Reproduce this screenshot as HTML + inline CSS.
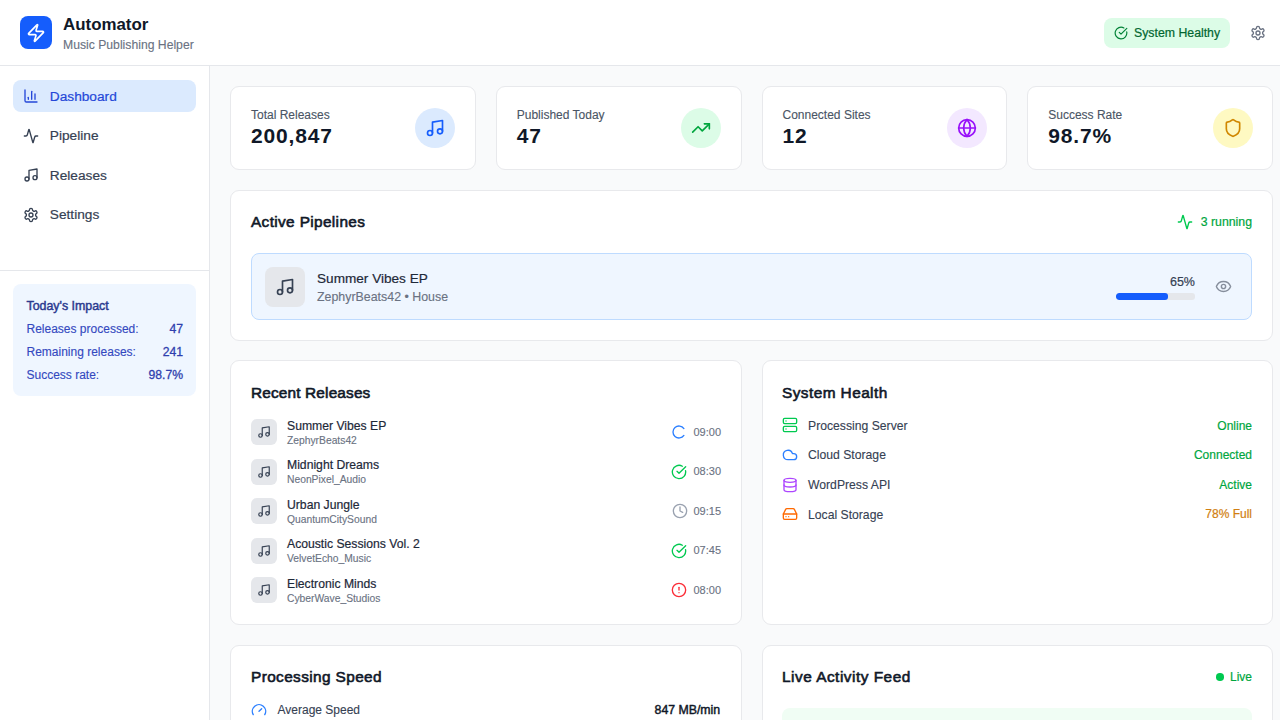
<!DOCTYPE html>
<html><head><meta charset="utf-8">
<style>
*{box-sizing:border-box;margin:0;padding:0}
html,body{width:1280px;height:720px;overflow:hidden;background:#f9fafb;font-family:"Liberation Sans",sans-serif;color:#101828}
.a{position:absolute}
.t{position:absolute;line-height:1;white-space:nowrap;-webkit-text-stroke:0.12px currentColor}
.r{text-align:right}
.m{-webkit-text-stroke:0.2px currentColor}
.t[style*="font-weight:700"]{-webkit-text-stroke:0}
svg.i{position:absolute;fill:none;stroke:currentColor;stroke-width:2;stroke-linecap:round;stroke-linejoin:round}
.card{position:absolute;background:#fff;border:1px solid #e8e9ec;border-radius:9px}
</style></head><body>
<!-- header -->
<div class="a" style="left:0;top:0;width:1280px;height:66px;background:#fff;border-bottom:1px solid #e5e7eb"></div>
<div class="a" style="left:20px;top:16.3px;width:32px;height:32.6px;background:#155dfc;border-radius:8px"></div>
<svg class="i" style="left:26px;top:22.5px;color:#fff" width="20" height="20" viewBox="0 0 24 24"><path d="M4 14a1 1 0 0 1-.78-1.63l9.9-10.2a.5.5 0 0 1 .86.46l-1.92 6.02A1 1 0 0 0 13 10h7a1 1 0 0 1 .78 1.63l-9.9 10.2a.5.5 0 0 1-.86-.46l1.92-6.02A1 1 0 0 0 11 14z"/></svg>
<div class="t" style="left:63px;top:16.7px;font-size:16.9px;font-weight:700;color:#101828">Automator</div>
<div class="t" style="left:63px;top:38.8px;font-size:12.2px;color:#6a7282">Music Publishing Helper</div>
<div class="a" style="left:1104px;top:18px;width:126px;height:30px;background:#dcfce7;border-radius:8px"></div>
<svg class="i" style="left:1113.7px;top:25.7px;color:#008236" width="14" height="14" viewBox="0 0 24 24"><path d="M21.801 10A10 10 0 1 1 17 3.335"/><path d="m9 11 3 3L22 4"/></svg>
<div class="t m" style="left:1134px;top:26.6px;font-size:12.3px;color:#016630">System Healthy</div>
<svg class="i" style="left:1250px;top:24.5px;color:#6a7282" width="16" height="16" viewBox="0 0 24 24"><path d="M12.22 2h-.44a2 2 0 0 0-2 2v.18a2 2 0 0 1-1 1.73l-.43.25a2 2 0 0 1-2 0l-.15-.08a2 2 0 0 0-2.73.73l-.22.38a2 2 0 0 0 .73 2.73l.15.1a2 2 0 0 1 1 1.72v.51a2 2 0 0 1-1 1.74l-.15.09a2 2 0 0 0-.73 2.73l.22.38a2 2 0 0 0 2.73.73l.15-.08a2 2 0 0 1 2 0l.43.25a2 2 0 0 1 1 1.73V20a2 2 0 0 0 2 2h.44a2 2 0 0 0 2-2v-.18a2 2 0 0 1 1-1.73l.43-.25a2 2 0 0 1 2 0l.15.08a2 2 0 0 0 2.73-.73l.22-.39a2 2 0 0 0-.73-2.73l-.15-.08a2 2 0 0 1-1-1.74v-.5a2 2 0 0 1 1-1.74l.15-.09a2 2 0 0 0 .73-2.73l-.22-.38a2 2 0 0 0-2.73-.73l-.15.08a2 2 0 0 1-2 0l-.43-.25a2 2 0 0 1-1-1.73V4a2 2 0 0 0-2-2z"/><circle cx="12" cy="12" r="3"/></svg>

<!-- sidebar -->
<div class="a" style="left:0;top:66px;width:210px;height:654px;background:#fff;border-right:1px solid #e5e7eb"></div>
<div class="a" style="left:13px;top:80px;width:183px;height:32px;background:#dbeafe;border-radius:8px"></div>
<svg class="i" style="left:23.3px;top:88px;color:#2447d8" width="16" height="16" viewBox="0 0 24 24"><path d="M3 3v16a2 2 0 0 0 2 2h16"/><path d="M18 17V9"/><path d="M13 17V5"/><path d="M8 17v-3"/></svg>
<div class="t m" style="left:49.8px;top:90px;font-size:13.7px;color:#2447d8">Dashboard</div>
<svg class="i" style="left:23px;top:127.5px;color:#364153" width="16" height="16" viewBox="0 0 24 24"><path d="M22 12h-2.48a2 2 0 0 0-1.93 1.46l-2.35 8.36a.25.25 0 0 1-.48 0L9.24 2.18a.25.25 0 0 0-.48 0l-2.35 8.36A2 2 0 0 1 4.49 12H2"/></svg>
<div class="t m" style="left:49.8px;top:129.3px;font-size:13.7px;color:#364153">Pipeline</div>
<svg class="i" style="left:23px;top:167px;color:#364153" width="16" height="16" viewBox="0 0 24 24"><path d="M9 18V5l12-2v13"/><circle cx="6" cy="18" r="3"/><circle cx="18" cy="16" r="3"/></svg>
<div class="t m" style="left:49.8px;top:168.5px;font-size:13.7px;color:#364153">Releases</div>
<svg class="i" style="left:23px;top:206.5px;color:#364153" width="16" height="16" viewBox="0 0 24 24"><path d="M12.22 2h-.44a2 2 0 0 0-2 2v.18a2 2 0 0 1-1 1.730l-.43.25a2 2 0 0 1-2 0l-.15-.08a2 2 0 0 0-2.73.73l-.22.38a2 2 0 0 0 .73 2.73l.15.1a2 2 0 0 1 1 1.72v.51a2 2 0 0 1-1 1.74l-.15.09a2 2 0 0 0-.73 2.73l.22.38a2 2 0 0 0 2.73.73l.15-.08a2 2 0 0 1 2 0l.43.25a2 2 0 0 1 1 1.73V20a2 2 0 0 0 2 2h.44a2 2 0 0 0 2-2v-.18a2 2 0 0 1 1-1.73l.43-.25a2 2 0 0 1 2 0l.15.08a2 2 0 0 0 2.73-.73l.22-.39a2 2 0 0 0-.73-2.73l-.15-.08a2 2 0 0 1-1-1.740v-.5a2 2 0 0 1 1-1.74l.15-.09a2 2 0 0 0 .73-2.73l-.22-.38a2 2 0 0 0-2.73-.73l-.15.08a2 2 0 0 1-2 0l-.43-.25a2 2 0 0 1-1-1.73V4a2 2 0 0 0-2-2z"/><circle cx="12" cy="12" r="3"/></svg>
<div class="t m" style="left:49.8px;top:207.5px;font-size:13.7px;color:#364153">Settings</div>
<div class="a" style="left:0;top:270px;width:209px;height:1px;background:#e5e7eb"></div>
<div class="a" style="left:13px;top:284px;width:183px;height:112px;background:#eff6ff;border-radius:8px"></div>
<div class="t" style="left:26.5px;top:299.9px;font-size:12.4px;-webkit-text-stroke:0.45px #2b3a8f;color:#2b3a8f">Today's Impact</div>
<div class="t" style="left:26.5px;top:323.3px;font-size:12px;color:#3348c0">Releases processed:</div>
<div class="t r" style="right:1097px;top:323.3px;font-size:12.2px;-webkit-text-stroke:0.3px #2f3fae;color:#2f3fae">47</div>
<div class="t" style="left:26.5px;top:346.3px;font-size:12px;color:#3348c0">Remaining releases:</div>
<div class="t r" style="right:1097px;top:346.3px;font-size:12.2px;-webkit-text-stroke:0.3px #2f3fae;color:#2f3fae">241</div>
<div class="t" style="left:26.5px;top:369px;font-size:12px;color:#3348c0">Success rate:</div>
<div class="t r" style="right:1097px;top:369px;font-size:12.2px;-webkit-text-stroke:0.3px #2f3fae;color:#2f3fae">98.7%</div>

<!-- stats -->
<div class="card" style="left:230.0px;top:86px;width:245.75px;height:84px"></div>
<div class="t" style="left:251.0px;top:109.4px;font-size:12px;color:#4a5565">Total Releases</div>
<div class="t" style="left:251.0px;top:125px;font-size:21px;font-weight:700;letter-spacing:0.85px;color:#101828">200,847</div>
<div class="a" style="left:415.25px;top:107.5px;width:40px;height:40px;border-radius:50%;background:#dbeafe"></div>
<svg class="i" style="left:425.25px;top:117.5px;color:#155dfc" width="20" height="20" viewBox="0 0 24 24"><path d="M9 18V5l12-2v13"/><circle cx="6" cy="18" r="3"/><circle cx="18" cy="16" r="3"/></svg>
<div class="card" style="left:495.75px;top:86px;width:245.75px;height:84px"></div>
<div class="t" style="left:516.75px;top:109.4px;font-size:12px;color:#4a5565">Published Today</div>
<div class="t" style="left:516.75px;top:125px;font-size:21px;font-weight:700;letter-spacing:0.85px;color:#101828">47</div>
<div class="a" style="left:681.0px;top:107.5px;width:40px;height:40px;border-radius:50%;background:#dcfce7"></div>
<svg class="i" style="left:691.0px;top:117.5px;color:#00a63e" width="20" height="20" viewBox="0 0 24 24"><polyline points="22 7 13.5 15.5 8.5 10.5 2 17"/><polyline points="16 7 22 7 22 13"/></svg>
<div class="card" style="left:761.5px;top:86px;width:245.75px;height:84px"></div>
<div class="t" style="left:782.5px;top:109.4px;font-size:12px;color:#4a5565">Connected Sites</div>
<div class="t" style="left:782.5px;top:125px;font-size:21px;font-weight:700;letter-spacing:0.85px;color:#101828">12</div>
<div class="a" style="left:946.75px;top:107.5px;width:40px;height:40px;border-radius:50%;background:#f3e8ff"></div>
<svg class="i" style="left:956.75px;top:117.5px;color:#9810fa" width="20" height="20" viewBox="0 0 24 24"><circle cx="12" cy="12" r="10"/><path d="M12 2a14.5 14.5 0 0 0 0 20 14.5 14.5 0 0 0 0-20"/><path d="M2 12h20"/></svg>
<div class="card" style="left:1027.25px;top:86px;width:245.75px;height:84px"></div>
<div class="t" style="left:1048.25px;top:109.4px;font-size:12px;color:#4a5565">Success Rate</div>
<div class="t" style="left:1048.25px;top:125px;font-size:21px;font-weight:700;letter-spacing:0.85px;color:#101828">98.7%</div>
<div class="a" style="left:1212.5px;top:107.5px;width:40px;height:40px;border-radius:50%;background:#fef9c2"></div>
<svg class="i" style="left:1222.5px;top:117.5px;color:#d08700" width="20" height="20" viewBox="0 0 24 24"><path d="M20 13c0 5-3.5 7.5-7.66 8.95a1 1 0 0 1-.67-.01C7.5 20.5 4 18 4 13V6a1 1 0 0 1 1-1c2 0 4.5-1.2 6.24-2.72a1.17 1.17 0 0 1 1.52 0C14.51 3.81 17 5 19 5a1 1 0 0 1 1 1z"/></svg>
<!-- active pipelines -->
<div class="card" style="left:230px;top:190px;width:1043px;height:151px"></div>
<div class="t" style="left:251px;top:213.8px;font-size:15.4px;letter-spacing:0.35px;-webkit-text-stroke:0.6px #101828;color:#101828">Active Pipelines</div>
<svg class="i" style="left:1176.5px;top:213.6px;color:#00c950" width="16" height="16" viewBox="0 0 24 24"><path d="M22 12h-2.48a2 2 0 0 0-1.93 1.46l-2.35 8.36a.25.25 0 0 1-.48 0L9.24 2.18a.25.25 0 0 0-.48 0l-2.35 8.36A2 2 0 0 1 4.49 12H2"/></svg>
<div class="t r m" style="right:28px;top:216.2px;font-size:12.3px;color:#00a63e">3 running</div>
<div class="a" style="left:251px;top:253px;width:1001px;height:67px;background:#eff6ff;border:1px solid #bedbff;border-radius:8px"></div>
<div class="a" style="left:264.5px;top:266.5px;width:40px;height:40px;background:#e5e7eb;border-radius:8px"></div>
<svg class="i" style="left:274.5px;top:276.5px;color:#364153" width="20" height="20" viewBox="0 0 24 24"><path d="M9 18V5l12-2v13"/><circle cx="6" cy="18" r="3"/><circle cx="18" cy="16" r="3"/></svg>
<div class="t m" style="left:317px;top:272.4px;font-size:13.6px;color:#1e2939">Summer Vibes EP</div>
<div class="t" style="left:317px;top:290.6px;font-size:12.4px;color:#6a7282">ZephyrBeats42 &bull; House</div>
<div class="t r m" style="right:85px;top:275.6px;font-size:12.5px;color:#364153">65%</div>
<div class="a" style="left:1116.3px;top:293px;width:79px;height:6.5px;background:#e5e7eb;border-radius:3px;overflow:hidden"><div style="width:65%;height:100%;background:#155dfc;border-radius:3px"></div></div>
<svg class="i" style="left:1215px;top:278.1px;color:#868e9c" width="17" height="17" viewBox="0 0 24 24"><path d="M2.062 12.348a1 1 0 0 1 0-.696 10.75 10.75 0 0 1 19.876 0 1 1 0 0 1 0 .696 10.75 10.75 0 0 1-19.876 0"/><circle cx="12" cy="12" r="3"/></svg>
<!-- recent releases -->
<div class="card" style="left:230px;top:360px;width:511.75px;height:265px"></div>
<div class="t" style="left:251px;top:384.8px;font-size:15.4px;letter-spacing:0.15px;-webkit-text-stroke:0.6px #101828;color:#101828">Recent Releases</div>
<div class="a" style="left:251px;top:419.0px;width:26px;height:26px;background:#e5e7eb;border-radius:6px"></div>
<svg class="i" style="left:257px;top:425.0px;color:#364153" width="14" height="14" viewBox="0 0 24 24"><path d="M9 18V5l12-2v13"/><circle cx="6" cy="18" r="3"/><circle cx="18" cy="16" r="3"/></svg>
<div class="t m" style="left:287px;top:419.64px;font-size:12.2px;color:#1e2939">Summer Vibes EP</div>
<div class="t" style="left:287px;top:435.51px;font-size:10.3px;color:#6a7282">ZephyrBeats42</div>
<svg class="i" style="left:670.5px;top:424.0px;color:#2b7fff" width="16" height="16" viewBox="0 0 24 24"><path d="M19.37 17.16A9 9 0 1 1 19.37 6.84"/></svg>
<div class="t r" style="right:559px;top:426.69px;font-size:11px;color:#6a7282">09:00</div>
<div class="a" style="left:251px;top:458.5px;width:26px;height:26px;background:#e5e7eb;border-radius:6px"></div>
<svg class="i" style="left:257px;top:464.5px;color:#364153" width="14" height="14" viewBox="0 0 24 24"><path d="M9 18V5l12-2v13"/><circle cx="6" cy="18" r="3"/><circle cx="18" cy="16" r="3"/></svg>
<div class="t m" style="left:287px;top:459.14px;font-size:12.2px;color:#1e2939">Midnight Dreams</div>
<div class="t" style="left:287px;top:475.01px;font-size:10.3px;color:#6a7282">NeonPixel_Audio</div>
<svg class="i" style="left:670.5px;top:463.5px;color:#00c950" width="16" height="16" viewBox="0 0 24 24"><path d="M21.801 10A10 10 0 1 1 17 3.335"/><path d="m9 11 3 3L22 4"/></svg>
<div class="t r" style="right:559px;top:466.19px;font-size:11px;color:#6a7282">08:30</div>
<div class="a" style="left:251px;top:498.0px;width:26px;height:26px;background:#e5e7eb;border-radius:6px"></div>
<svg class="i" style="left:257px;top:504.0px;color:#364153" width="14" height="14" viewBox="0 0 24 24"><path d="M9 18V5l12-2v13"/><circle cx="6" cy="18" r="3"/><circle cx="18" cy="16" r="3"/></svg>
<div class="t m" style="left:287px;top:498.64px;font-size:12.2px;color:#1e2939">Urban Jungle</div>
<div class="t" style="left:287px;top:514.51px;font-size:10.3px;color:#6a7282">QuantumCitySound</div>
<svg class="i" style="left:672px;top:503.0px;color:#99a1af" width="16" height="16" viewBox="0 0 24 24"><circle cx="12" cy="12" r="10"/><polyline points="12 6 12 12 16 14"/></svg>
<div class="t r" style="right:559px;top:505.69px;font-size:11px;color:#6a7282">09:15</div>
<div class="a" style="left:251px;top:537.5px;width:26px;height:26px;background:#e5e7eb;border-radius:6px"></div>
<svg class="i" style="left:257px;top:543.5px;color:#364153" width="14" height="14" viewBox="0 0 24 24"><path d="M9 18V5l12-2v13"/><circle cx="6" cy="18" r="3"/><circle cx="18" cy="16" r="3"/></svg>
<div class="t m" style="left:287px;top:538.14px;font-size:12.2px;color:#1e2939">Acoustic Sessions Vol. 2</div>
<div class="t" style="left:287px;top:554.01px;font-size:10.3px;color:#6a7282">VelvetEcho_Music</div>
<svg class="i" style="left:670.5px;top:542.5px;color:#00c950" width="16" height="16" viewBox="0 0 24 24"><path d="M21.801 10A10 10 0 1 1 17 3.335"/><path d="m9 11 3 3L22 4"/></svg>
<div class="t r" style="right:559px;top:545.19px;font-size:11px;color:#6a7282">07:45</div>
<div class="a" style="left:251px;top:577.0px;width:26px;height:26px;background:#e5e7eb;border-radius:6px"></div>
<svg class="i" style="left:257px;top:583.0px;color:#364153" width="14" height="14" viewBox="0 0 24 24"><path d="M9 18V5l12-2v13"/><circle cx="6" cy="18" r="3"/><circle cx="18" cy="16" r="3"/></svg>
<div class="t m" style="left:287px;top:577.64px;font-size:12.2px;color:#1e2939">Electronic Minds</div>
<div class="t" style="left:287px;top:593.51px;font-size:10.3px;color:#6a7282">CyberWave_Studios</div>
<svg class="i" style="left:670.5px;top:582.0px;color:#fb2c36" width="16" height="16" viewBox="0 0 24 24"><circle cx="12" cy="12" r="10"/><line x1="12" x2="12" y1="8" y2="12"/><line x1="12" x2="12.01" y1="16" y2="16"/></svg>
<div class="t r" style="right:559px;top:584.69px;font-size:11px;color:#6a7282">08:00</div>
<!-- system health -->
<div class="card" style="left:761.5px;top:360px;width:511.5px;height:265px"></div>
<div class="t" style="left:782px;top:384.8px;font-size:15.4px;letter-spacing:0.43px;-webkit-text-stroke:0.6px #101828;color:#101828">System Health</div>
<svg class="i" style="left:782px;top:417.40px;color:#00c950" width="16" height="16" viewBox="0 0 24 24"><rect width="20" height="8" x="2" y="2" rx="2" ry="2"/><rect width="20" height="8" x="2" y="14" rx="2" ry="2"/><line x1="6" x2="6.01" y1="6" y2="6"/><line x1="6" x2="6.01" y1="18" y2="18"/></svg>
<div class="t" style="left:808px;top:419.82px;font-size:12.2px;color:#364153">Processing Server</div>
<div class="t r m" style="right:28px;top:419.54px;font-size:12px;color:#00a63e">Online</div>
<svg class="i" style="left:782px;top:447.00px;color:#2b7fff" width="16" height="16" viewBox="0 0 24 24"><path d="M17.5 19H9a7 7 0 1 1 6.71-9h1.79a4.5 4.5 0 1 1 0 9Z"/></svg>
<div class="t" style="left:808px;top:449.42px;font-size:12.2px;color:#364153">Cloud Storage</div>
<div class="t r m" style="right:28px;top:449.14px;font-size:12px;color:#00a63e">Connected</div>
<svg class="i" style="left:782px;top:476.60px;color:#ad46ff" width="16" height="16" viewBox="0 0 24 24"><ellipse cx="12" cy="5" rx="9" ry="3"/><path d="M3 5V19A9 3 0 0 0 21 19V5"/><path d="M3 12A9 3 0 0 0 21 12"/></svg>
<div class="t" style="left:808px;top:479.02px;font-size:12.2px;color:#364153">WordPress API</div>
<div class="t r m" style="right:28px;top:478.74px;font-size:12px;color:#00a63e">Active</div>
<svg class="i" style="left:782px;top:506.20px;color:#ff6900" width="16" height="16" viewBox="0 0 24 24"><line x1="22" x2="2" y1="12" y2="12"/><path d="M5.45 5.11 2 12v6a2 2 0 0 0 2 2h16a2 2 0 0 0 2-2v-6l-3.45-6.89A2 2 0 0 0 16.76 4H7.24a2 2 0 0 0-1.79 1.11z"/><line x1="6" x2="6.01" y1="16" y2="16"/><line x1="10" x2="10.01" y1="16" y2="16"/></svg>
<div class="t" style="left:808px;top:508.62px;font-size:12.2px;color:#364153">Local Storage</div>
<div class="t r m" style="right:28px;top:508.34px;font-size:12px;color:#d17f12">78% Full</div>
<!-- processing speed -->
<div class="card" style="left:230px;top:645px;width:511.75px;height:200px"></div>
<div class="t" style="left:251px;top:668.7px;font-size:15.4px;letter-spacing:0.38px;-webkit-text-stroke:0.6px #101828;color:#101828">Processing Speed</div>
<svg class="i" style="left:250.5px;top:701.5px;color:#2b7fff" width="16" height="16" viewBox="0 0 24 24"><path d="m12 14 4-4"/><path d="M3.34 19a10 10 0 1 1 17.32 0"/></svg>
<div class="t" style="left:277.5px;top:704.2px;font-size:12px;color:#364153">Average Speed</div>
<div class="t r" style="right:559.8px;top:704.2px;font-size:12.3px;-webkit-text-stroke:0.45px #101828;color:#101828">847 MB/min</div>
<!-- live activity -->
<div class="card" style="left:761.5px;top:645px;width:511.5px;height:200px"></div>
<div class="t" style="left:782px;top:668.9px;font-size:15.4px;letter-spacing:0.5px;-webkit-text-stroke:0.6px #101828;color:#101828">Live Activity Feed</div>
<div class="a" style="left:1216.3px;top:673px;width:7.5px;height:7.5px;border-radius:50%;background:#00c950"></div>
<div class="t r m" style="right:28px;top:670.6px;font-size:12px;color:#00a63e">Live</div>
<div class="a" style="left:782px;top:708px;width:470px;height:60px;background:#f0fdf4;border-radius:8px"></div>
<!-- MAIN -->
</body></html>
